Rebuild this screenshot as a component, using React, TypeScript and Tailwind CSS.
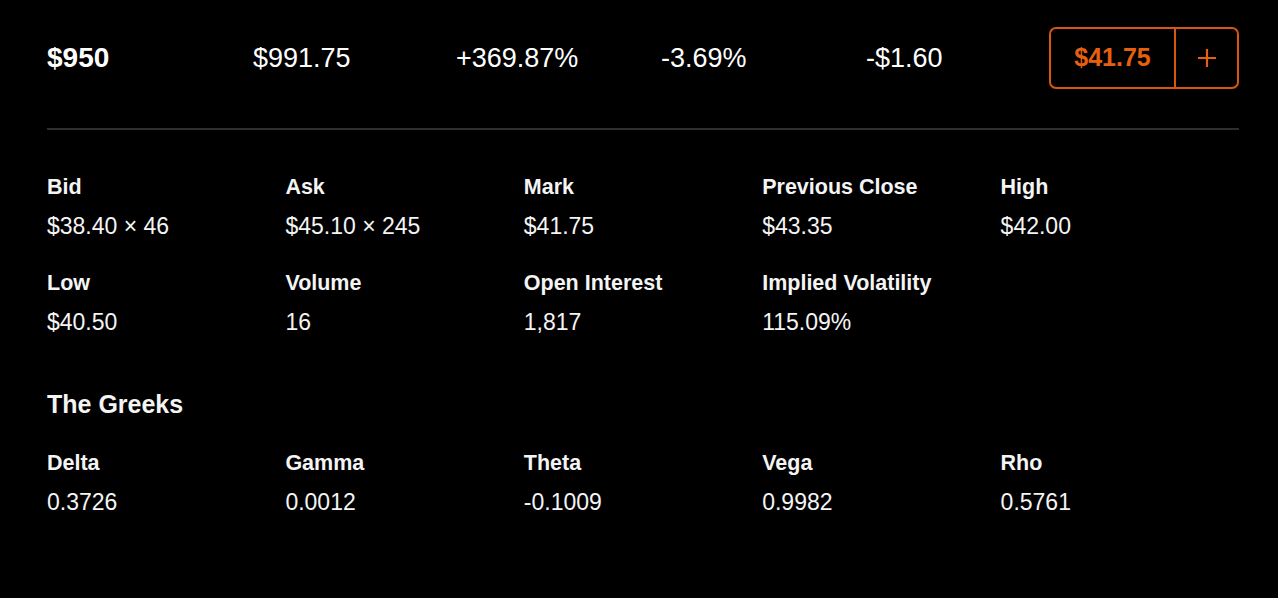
import React from "react";

const stats: [string, string][] = [
  ["Bid", "$38.40 × 46"],
  ["Ask", "$45.10 × 245"],
  ["Mark", "$41.75"],
  ["Previous Close", "$43.35"],
  ["High", "$42.00"],
  ["Low", "$40.50"],
  ["Volume", "16"],
  ["Open Interest", "1,817"],
  ["Implied Volatility", "115.09%"],
];

const greeks: [string, string][] = [
  ["Delta", "0.3726"],
  ["Gamma", "0.0012"],
  ["Theta", "-0.1009"],
  ["Vega", "0.9982"],
  ["Rho", "0.5761"],
];

function Cell({ label, value }: { label: string; value: string }) {
  return (
    <div className="flex flex-col">
      <div className="text-[21.5px] leading-[28px] font-bold text-[#f4f4f4]">{label}</div>
      <div className="mt-[11px] text-[23px] leading-[28px] text-[#f4f4f4]">{value}</div>
    </div>
  );
}

export default function App() {
  return (
    <div
      className="min-h-[598px] w-full bg-black text-white pt-[27px] pl-[47px] pr-[39px]"
      style={{ fontFamily: '"Liberation Sans", Arial, sans-serif' }}
    >
      <div className="flex items-center h-[62px]">
        <div className="w-[206px] text-[28px] font-bold">$950</div>
        <div className="w-[203px] text-[27px]">$991.75</div>
        <div className="w-[205px] text-[27px]">+369.87%</div>
        <div className="w-[205px] text-[27px]">-3.69%</div>
        <div className="text-[27px]">-$1.60</div>
        <div className="ml-auto flex h-[62px] w-[190px] rounded-[7px] border-2 border-[#d9560d]">
          <div className="flex w-[125px] items-center justify-center border-r-2 border-[#d9560d] text-[25px] font-bold text-[#e5600f]">
            $41.75
          </div>
          <div className="flex flex-1 items-center justify-center">
            <svg width="22" height="22" viewBox="0 0 22 22" fill="none">
              <path d="M11 2v18M2 11h18" stroke="#e5600f" strokeWidth="2.2" />
            </svg>
          </div>
        </div>
      </div>

      <div className="mt-[39px] h-[2px] bg-[#2e2e2e]" />

      <div className="mt-[43px] grid grid-cols-5 gap-y-[29px]">
        {stats.map(([l, v]) => (
          <Cell key={l} label={l} value={v} />
        ))}
      </div>

      <div className="mt-[52px] text-[25px] leading-[32px] font-bold text-[#f4f4f4]">
        The Greeks
      </div>

      <div className="mt-[29px] grid grid-cols-5">
        {greeks.map(([l, v]) => (
          <Cell key={l} label={l} value={v} />
        ))}
      </div>
    </div>
  );
}
